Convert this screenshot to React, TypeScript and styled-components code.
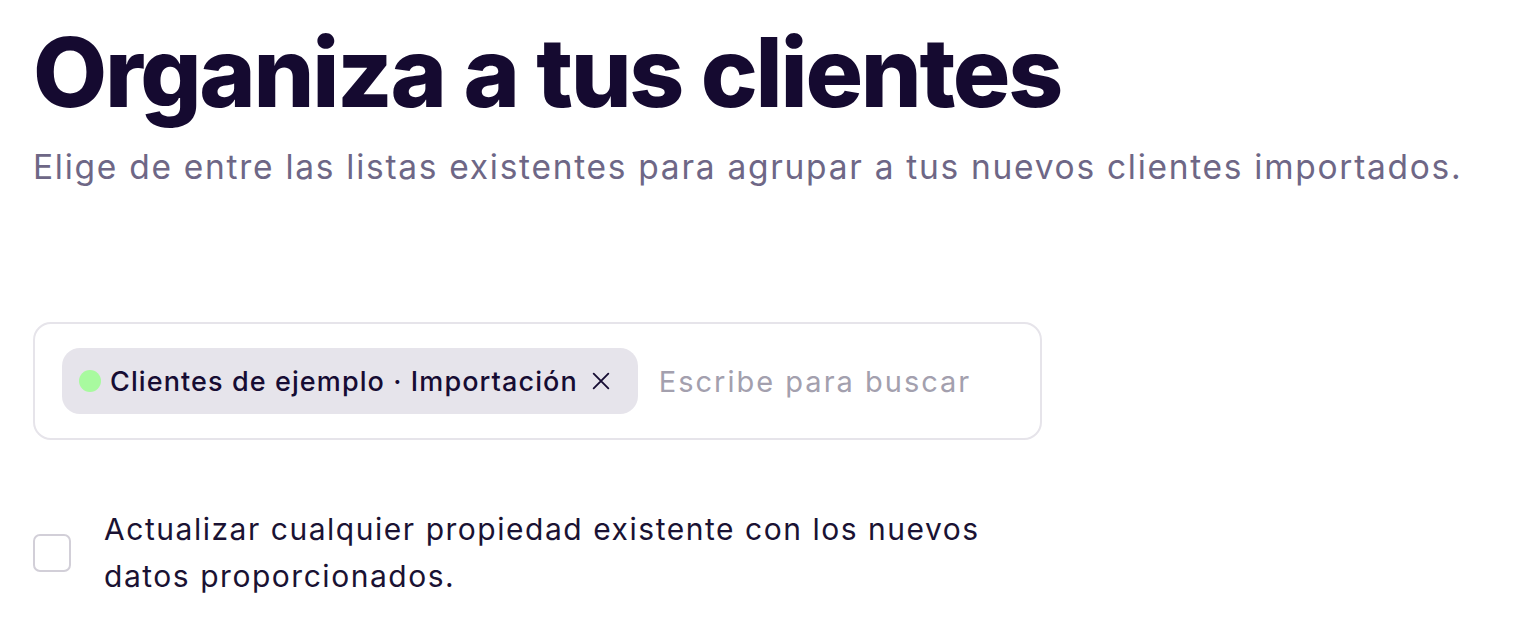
import React from "react";
import styled, { createGlobalStyle } from "styled-components";

const Global = createGlobalStyle`
  html, body { margin: 0; padding: 0; background: #ffffff; }
  body { font-family: "Inter", "Liberation Sans", sans-serif; }
`;

const Page = styled.div`
  padding: 17px 33px 0 33px;
  display: flex;
  flex-direction: column;
`;

const Title = styled.h1`
  margin: 0;
  font-family: "Inter", "Liberation Sans", sans-serif;
  font-weight: 800;
  font-size: 96px;
  line-height: 110px;
  letter-spacing: -2.3px;
  color: #150a30;
  white-space: nowrap;
`;

const Subtitle = styled.p`
  margin: 20px 0 0 0;
  font-size: 33.5px;
  line-height: 40px;
  letter-spacing: 1.72px;
  color: #6e6786;
  font-weight: 400;
  white-space: nowrap;
`;

const Field = styled.div`
  margin-top: 135px;
  width: 1009px;
  height: 118px;
  box-sizing: border-box;
  border: 2px solid #e6e4ea;
  border-radius: 18px;
  display: flex;
  align-items: center;
  padding: 0 27px;
  gap: 21px;
`;

const Chip = styled.div`
  display: flex;
  align-items: center;
  height: 66px;
  background: #e6e4eb;
  border-radius: 18px;
  padding: 0 26px 0 17px;
  gap: 9px;
`;

const Dot = styled.span<{ $color: string }>`
  width: 22px;
  height: 22px;
  border-radius: 50%;
  background: ${(p) => p.$color};
  flex: none;
`;

const ChipText = styled.span`
  font-size: 27px;
  font-weight: 500;
  color: #160c33;
  letter-spacing: 1.1px;
  white-space: nowrap;
`;

const Close = styled.svg`
  width: 22px;
  height: 22px;
  margin-left: 3px;
  flex: none;
`;

const Placeholder = styled.span`
  font-size: 29px;
  font-weight: 400;
  color: #a3a0ae;
  letter-spacing: 2px;
  white-space: nowrap;
`;

const CheckRow = styled.label`
  margin-top: 66px;
  display: flex;
  align-items: center;
  gap: 33px;
`;

const Box = styled.span`
  width: 38px;
  height: 38px;
  box-sizing: border-box;
  border: 2px solid #d2cfd8;
  border-radius: 7px;
  flex: none;
`;

const CheckLabel = styled.span`
  font-size: 30px;
  line-height: 47px;
  color: #1a1233;
  letter-spacing: 1.53px;
  white-space: nowrap;
`;

export default function App() {
  return (
    <>
      <Global />
      <Page>
        <Title>Organiza a tus clientes</Title>
        <Subtitle>
          Elige de entre las listas existentes para agrupar a tus nuevos clientes importados.
        </Subtitle>
        <Field>
          <Chip>
            <Dot $color="#a8fa9f" />
            <ChipText>Clientes de ejemplo · Importación</ChipText>
            <Close viewBox="0 0 24 24" fill="none" stroke="#160c33" strokeWidth="2" strokeLinecap="round">
              <path d="M4 4 L20 20 M20 4 L4 20" />
            </Close>
          </Chip>
          <Placeholder>Escribe para buscar</Placeholder>
        </Field>
        <CheckRow>
          <Box />
          <CheckLabel>
            Actualizar cualquier propiedad existente con los nuevos
            <br />
            datos proporcionados.
          </CheckLabel>
        </CheckRow>
      </Page>
    </>
  );
}
